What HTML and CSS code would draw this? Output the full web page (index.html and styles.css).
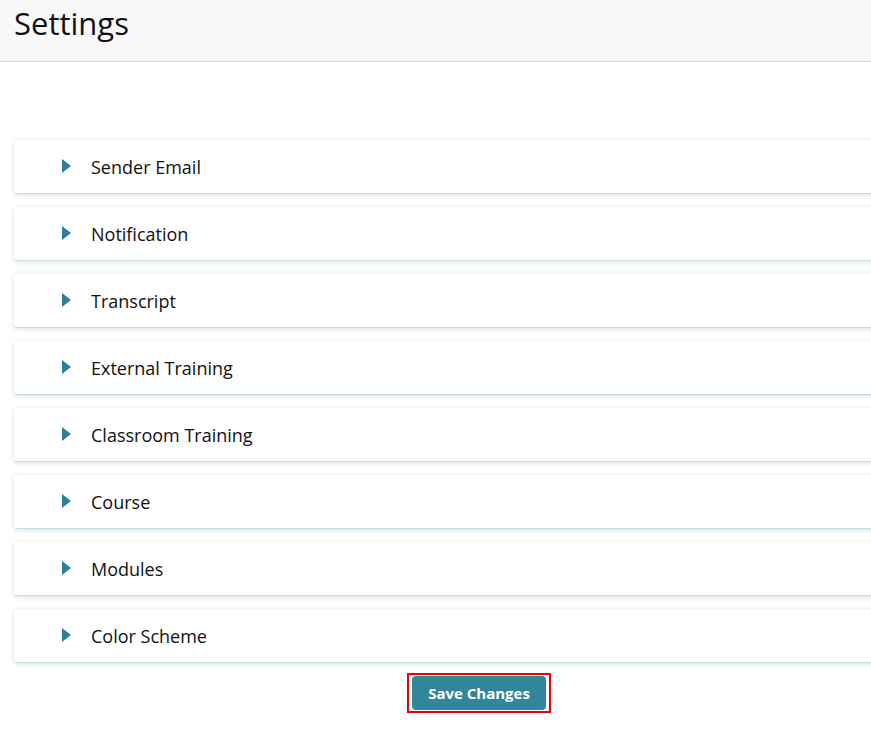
FILE: index.html
```html
<!DOCTYPE html>
<html>
<head>
<meta charset="utf-8">
<link rel="stylesheet" href="styles.css">
</head>
<body>
<div class="page">
  <header class="header"><h1 class="title">Settings</h1></header>
  <main class="content">
    <div class="panel"><span class="caret"></span><span class="label">Sender Email</span></div>
    <div class="panel"><span class="caret"></span><span class="label">Notification</span></div>
    <div class="panel"><span class="caret"></span><span class="label">Transcript</span></div>
    <div class="panel"><span class="caret"></span><span class="label">External Training</span></div>
    <div class="panel"><span class="caret"></span><span class="label">Classroom Training</span></div>
    <div class="panel"><span class="caret"></span><span class="label">Course</span></div>
    <div class="panel"><span class="caret"></span><span class="label">Modules</span></div>
    <div class="panel"><span class="caret"></span><span class="label">Color Scheme</span></div>
    <div class="actions">
      <span class="highlight"><button class="save">Save Changes</button></span>
    </div>
  </main>
</div>
</body>
</html>
```
FILE: styles.css
```css
html, body { margin: 0; padding: 0; overflow: hidden; background: #fff; }
body { font-family: "Open Sans", "Liberation Sans", sans-serif; color: #111; }
.page { width: 958px; }
.header {
  height: 61px;
  background: #f9f9f9;
  border-bottom: 1px solid #d3d9df;
  display: flex;
  align-items: center;
  padding-left: 14px;
}
.title { margin: 0 0 14px 0; font-size: 31px; font-weight: 400; line-height: 1; color: #111; }
.content {
  padding: 78px 14px 0 14px;
  display: flex;
  flex-direction: column;
  gap: 13px;
}
.panel {
  height: 53px;
  background: #fff;
  border-radius: 3px;
  border-bottom: 1px solid #c5dde6;
  box-shadow: 0 1px 5px rgba(0,0,0,0.13);
  display: flex;
  align-items: center;
  padding-left: 48px;
}
.caret {
  width: 0; height: 0;
  border-top: 7px solid transparent;
  border-bottom: 7px solid transparent;
  border-left: 9px solid #2f7f99;
  margin-right: 20px;
  margin-top: -1px;
}
.label { font-size: 18px; color: #111; margin-top: 1px; }
.actions { display: flex; justify-content: center; margin-top: -3px; }
.highlight { border: 2px solid #ee0000; padding: 1px 3px; display: inline-flex; }
.save {
  width: 134px; height: 34px;
  background: #31869c;
  color: #fff;
  border: none;
  border-radius: 4px;
  font-family: "Open Sans", "Liberation Sans", sans-serif;
  font-weight: 700;
  font-size: 15px;
  padding: 0;
}
```
